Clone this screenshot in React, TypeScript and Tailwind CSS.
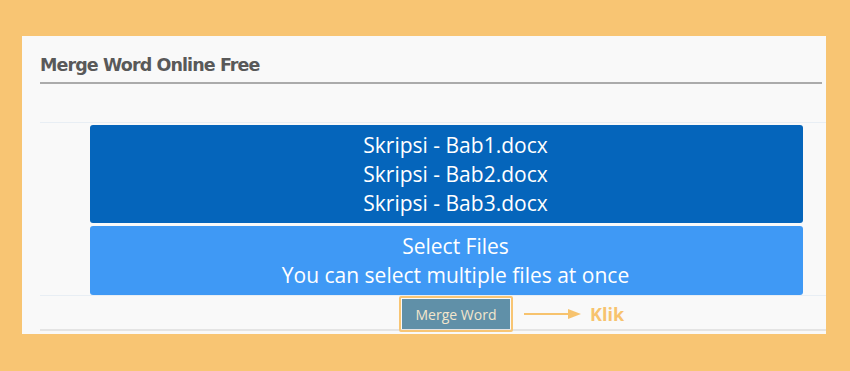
import React from 'react'

const files = ["Skripsi - Bab1.docx", "Skripsi - Bab2.docx", "Skripsi - Bab3.docx"];

const App = () => {
    return (
        <div className="w-[850px] h-[371px] bg-[#f8c573] pt-[36px] pl-[22px] overflow-hidden">
            <div className="w-[804px] h-[298px] bg-[#f9f9f9] pl-[18px] overflow-hidden">
                {/* heading */}
                <div className="pt-[17px] pb-[5px] mr-[4px] border-b-2 border-[#ababab]">
                    <h1 className="text-[17.5px] leading-[24px] font-bold text-[#595959] font-['DejaVu_Sans',sans-serif] tracking-[-0.9px]">
                        Merge Word Online Free
                    </h1>
                </div>

                <div className="mt-[38px] border-t border-[#e8eef4] pt-[2px] pl-[50px] pr-[23px] font-['Open_Sans',sans-serif] text-white text-[21px] leading-[29px] text-center">
                    <div className="bg-[#0565bb] rounded-[3px] pt-[6px] pb-[5px] pl-[18px]">
                        {files.map((name) => (
                            <p key={name}>{name}</p>
                        ))}
                    </div>
                    <div className="mt-[3px] bg-[#3f99f5] rounded-[3px] pt-[6px] pb-[5px] pl-[18px]">
                        <p>Select Files</p>
                        <p>You can select multiple files at once</p>
                    </div>
                </div>

                <div className="border-t border-[#e8eef4] border-b-2 border-b-[#e4e4e4] h-[36px] flex items-start">
                    <button className="ml-[359px] w-[114px] h-[36px] border-2 border-[#f8c573] rounded-[2px] p-[1px] -mb-[2px]">
                        <span className="flex items-center justify-center h-full bg-[#6090a8] text-[#f3e6cc] text-[14px] font-['Open_Sans',sans-serif]">
                            Merge Word
                        </span>
                    </button>
                    <div className="flex items-center h-[36px] ml-[11px] text-[#f7c36e]">
                        <svg width="58" height="12" viewBox="0 0 58 12">
                            <line x1="0" y1="6" x2="46" y2="6" stroke="#f7c36e" strokeWidth="2" />
                            <polygon points="44,1 57,6 44,11" fill="#f7c36e" />
                        </svg>
                        <span className="ml-[8px] text-[18px] font-bold font-['Open_Sans',sans-serif]">Klik</span>
                    </div>
                </div>
            </div>
        </div>
    );
};

export default App;
